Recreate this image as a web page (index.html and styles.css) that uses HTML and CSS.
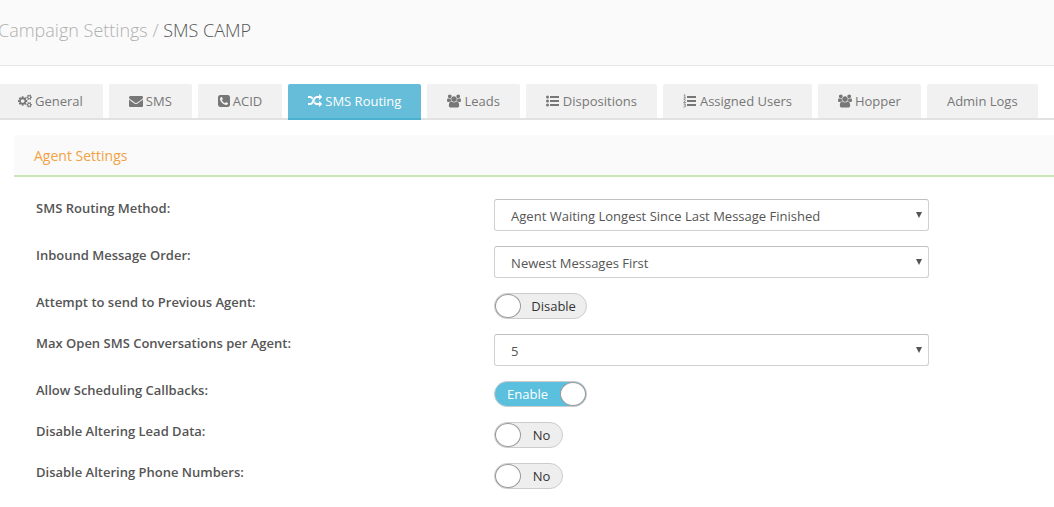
FILE: index.html
```html
<!DOCTYPE html>
<html lang="en">
<head>
<meta charset="utf-8">
<meta name="viewport" content="width=device-width, initial-scale=1">
<title>Campaign Settings / SMS CAMP</title>
<link rel="stylesheet" href="styles.css">
</head>
<body>
<svg class="sprite" aria-hidden="true">
  <symbol id="i-users" viewBox="0 0 1920 1792"><path d="M593 896q-162 5-265 128h-134q-82 0-138-40.500t-56-118.500q0-353 124-353 6 0 43.500 21t97.500 42.500 119 21.500q67 0 133-23-5 37-5 66 0 139 81 256zm1071 637q0 120-73 189.500t-194 69.500h-874q-121 0-194-69.500t-73-189.500q0-53 3.500-103.500t14-109 26.500-108.500 43-97.500 62-81 85.500-53.500 111.500-20q10 0 43 21.500t73 48 107 48 135 21.500 135-21.500 107-48 73-48 43-21.500q61 0 111.500 20t85.500 53.500 62 81 43 97.500 26.500 108.500 14 109 3.500 103.500zm-1024-1277q0 106-75 181t-181 75-181-75-75-181 75-181 181-75 181 75 75 181zm704 384q0 159-112.500 271.500t-271.500 112.500-271.500-112.500-112.500-271.500 112.500-271.500 271.500-112.500 271.500 112.500 112.500 271.500zm576 225q0 78-56 118.500t-138 40.500h-134q-103-123-265-128 81-117 81-256 0-29-5-66 66 23 133 23 59 0 119-21.500t97.500-42.500 43.500-21q124 0 124 353zm-128-609q0 106-75 181t-181 75-181-75-75-181 75-181 181-75 181 75 75 181z"/></symbol>
</svg>

<header class="page-head">
  <h1 class="page-title"><span class="page-section">Campaign Settings /</span> SMS CAMP</h1>
</header>

<nav class="tabs" aria-label="Campaign sections">
  <a class="tab" href="#general"><svg class="icon" viewBox="0 0 1920 1792" aria-hidden="true"><path d="M896 896q0-106-75-181t-181-75-181 75-75 181 75 181 181 75 181-75 75-181zm768 512q0-52-38-90t-90-38-90 38-38 90q0 53 37.500 90.500t90.500 37.500 90.500-37.500 37.500-90.500zm0-1024q0-52-38-90t-90-38-90 38-38 90q0 53 37.500 90.500t90.500 37.500 90.500-37.500 37.500-90.500zm-384 421v185q0 10-7 19.500t-16 10.500l-155 24q-11 35-32 76 34 48 90 115 7 11 7 20 0 12-7 19-23 30-82.500 89.500t-78.500 59.500q-11 0-21-7l-115-90q-37 19-77 31-11 108-23 155-7 24-30 24h-186q-11 0-20-7.500t-10-17.500l-23-153q-34-10-75-31l-118 89q-7 7-20 7-11 0-21-8-144-133-144-160 0-9 7-19 10-14 41-53t47-61q-23-44-35-82l-152-24q-10-1-17-9.500t-7-19.500v-185q0-10 7-19.500t16-10.500l155-24q11-35 32-76-34-48-90-115-7-11-7-20 0-12 7-20 22-30 82-89t79-59q11 0 21 7l115 90q34-18 77-32 11-108 23-154 7-24 30-24h186q11 0 20 7.500t10 17.500l23 153q34 10 75 31l118-89q8-7 20-7 11 0 21 8 144 133 144 160 0 8-7 19-12 16-42 54t-45 60q23 48 34 82l152 23q10 2 17 10.500t7 19.500zm640 533v140q0 16-149 31-12 27-30 52 51 113 51 138 0 4-4 7-122 71-124 71-8 0-46-47t-52-68q-20 2-30 2t-30-2q-14 21-52 68t-46 47q-2 0-124-71-4-3-4-7 0-25 51-138-18-25-30-52-149-15-149-31v-140q0-16 149-31 13-29 30-52-51-113-51-138 0-4 4-7 4-2 35-20t59-34 30-16q8 0 46 46.500t52 67.500q20-2 30-2t30 2q51-71 92-112l6-2q4 0 124 70 4 3 4 7 0 25-51 138 17 23 30 52 149 15 149 31zm0-1024v140q0 16-149 31-12 27-30 52 51 113 51 138 0 4-4 7-122 71-124 71-8 0-46-47t-52-68q-20 2-30 2t-30-2q-14 21-52 68t-46 47q-2 0-124-71-4-3-4-7 0-25 51-138-18-25-30-52-149-15-149-31v-140q0-16 149-31 13-29 30-52-51-113-51-138 0-4 4-7 4-2 35-20t59-34 30-16q8 0 46 46.500t52 67.500q20-2 30-2t30 2q51-71 92-112l6-2q4 0 124 70 4 3 4 7 0 25-51 138 17 23 30 52 149 15 149 31z"/></svg>General</a>
  <a class="tab" href="#sms"><svg class="icon" viewBox="0 0 1792 1792" aria-hidden="true"><path d="M1792 710v794q0 66-47 113t-113 47h-1472q-66 0-113-47t-47-113v-794q44 49 101 87 362 246 497 345 57 42 92.500 65.500t94.500 48 110 24.500h2q51 0 110-24.500t94.500-48 92.500-65.500q170-123 498-345 57-39 100-87zm0-294q0 79-49 151t-122 123q-376 261-468 325-10 7-42.500 31t-54 38.500-52 32.500-57.500 27-50 9h-2q-23 0-50-9t-57.500-27-52-32.500-54-38.500-42.500-31q-91-64-262-182.500t-205-142.500q-62-42-117-115.500t-55-136.500q0-78 41.500-130t118.500-52h1472q65 0 112.500 47t47.500 113z"/></svg>SMS</a>
  <a class="tab" href="#acid"><svg class="icon icon-narrow" viewBox="128 0 1536 1792" aria-hidden="true"><path d="M1408 1193q0-11-2-16t-18-16.500-40.500-25-47.500-26.500-45.500-25-28.500-15q-5-3-19-13t-25-15-21-5q-15 0-36.500 20.500t-39.500 45-38.500 45-33.500 20.500q-7 0-16.500-3.500t-15.500-6.500-17-9.500-14-8.500q-99-55-170-126.500t-127-170.500q-2-3-8.500-14t-9.500-17-6.500-15.500-3.500-16.500q0-13 20.500-33.500t45-38.500 45-39.500 20.500-36.500q0-10-5-21t-15-25-13-19q-3-6-15-28.500t-25-45.500-26.500-47.500-25-40.500-16.500-18-16-2q-48 0-101 22-46 21-80 94.500t-34 130.500q0 16 2.500 34t5 30.500 9 33 10 29.500 12.500 33 11 30q60 164 216.500 320.500t320.500 216.500q6 2 30 11t33 12.500 29.500 10 33 9 30.500 5 34 2.500q57 0 130.500-34t94.500-80q22-53 22-101zm256-777v960q0 119-84.500 203.500t-203.500 84.500h-960q-119 0-203.500-84.500t-84.500-203.500v-960q0-119 84.500-203.500t203.500-84.500h960q119 0 203.500 84.500t84.500 203.500z"/></svg>ACID</a>
  <a class="tab tab-active" href="#sms-routing" aria-current="page"><svg class="icon" viewBox="0 0 1792 1792" aria-hidden="true"><path d="M666 481q-60 92-137 273-22-45-37-72.500t-40.500-63.500-51-56.500-63-35-81.500-14.500h-224q-14 0-23-9t-9-23v-192q0-14 9-23t23-9h224q250 0 410 225zm1126 799q0 14-9 23l-320 320q-9 9-23 9-13 0-22.500-9.500t-9.500-22.500v-192q-32 0-85 .5t-81 1-73-1-71-5-64-10.500-63-18.500-58-28.500-59-40-55-53.500-56-69.500q59-93 136-273 22 45 37 72.500t40.500 63.500 51 56.500 63 35 81.500 14.500h256v-192q0-14 9-23t23-9q12 0 24 10l319 319q9 9 9 23zm0-896q0 14-9 23l-320 320q-9 9-23 9-13 0-22.500-9.500t-9.500-22.500v-192h-256q-48 0-87 15t-69 45-51 61.500-45 77.500q-32 62-78 171-29 66-49.500 111t-54 105-64 100-74 83-90 68.500-106.500 42-128 16.500h-224q-14 0-23-9t-9-23v-192q0-14 9-23t23-9h224q48 0 87-15t69-45 51-61.500 45-77.500q32-62 78-171 29-66 49.500-111t54-105 64-100 74-83 90-68.500 106.500-42 128-16.500h256v-192q0-14 9-23t23-9q12 0 24 10l319 319q9 9 9 23z"/></svg>SMS Routing</a>
  <a class="tab" href="#leads"><svg class="icon" aria-hidden="true"><use href="#i-users"/></svg>Leads</a>
  <a class="tab" href="#dispositions"><svg class="icon" viewBox="0 0 14 14" aria-hidden="true"><circle cx="1.500" cy="3" r="1.500"/><circle cx="1.500" cy="7" r="1.500"/><circle cx="1.500" cy="11" r="1.500"/><path d="M4 2h9v2H4zM4 6h9v2H4zM4 10h9v2H4z"/></svg>Dispositions</a>
  <a class="tab" href="#assigned-users"><svg class="icon" viewBox="0 0 14 14" aria-hidden="true"><path d="M4 2h9v2H4zM4 6h9v2H4zM4 10h9v2H4z"/><path class="icon-line" d="M.8 1.300 1.800.7V4M.6 4h2.300M.6 5.800q1.700-1 1.700.3Q2.200 7 .7 8.500h2.200M.6 10h2l-1 1.300q1.200 0 1.200 1T.5 13"/></svg>Assigned Users</a>
  <a class="tab" href="#hopper"><svg class="icon" aria-hidden="true"><use href="#i-users"/></svg>Hopper</a>
  <a class="tab" href="#admin-logs">Admin Logs</a>
</nav>

<main class="panel">
  <h2 class="panel-title">Agent Settings</h2>
  <form class="settings">
    <div class="row">
      <label class="row-label" for="routing">SMS Routing Method:</label>
      <div class="select-box">
        <select class="select" id="routing"><option>Agent Waiting Longest Since Last Message Finished</option></select>
        <svg class="arrow" viewBox="0 0 6 6" aria-hidden="true"><path d="M0 0h6L3 6z"/></svg>
      </div>
    </div>
    <div class="row">
      <label class="row-label" for="order">Inbound Message Order:</label>
      <div class="select-box">
        <select class="select" id="order"><option>Newest Messages First</option></select>
        <svg class="arrow" viewBox="0 0 6 6" aria-hidden="true"><path d="M0 0h6L3 6z"/></svg>
      </div>
    </div>
    <div class="row">
      <label class="row-label" for="previous">Attempt to send to Previous Agent:</label>
      <label class="toggle toggle-wide"><input class="toggle-input" type="checkbox" id="previous"><span class="knob"></span><span class="toggle-text">Disable</span></label>
    </div>
    <div class="row">
      <label class="row-label" for="max-open">Max Open SMS Conversations per Agent:</label>
      <div class="select-box">
        <select class="select" id="max-open"><option>5</option></select>
        <svg class="arrow" viewBox="0 0 6 6" aria-hidden="true"><path d="M0 0h6L3 6z"/></svg>
      </div>
    </div>
    <div class="row">
      <label class="row-label" for="callbacks">Allow Scheduling Callbacks:</label>
      <label class="toggle toggle-wide toggle-on"><input class="toggle-input" type="checkbox" id="callbacks" checked><span class="knob"></span><span class="toggle-text">Enable</span></label>
    </div>
    <div class="row">
      <label class="row-label" for="lead-data">Disable Altering Lead Data:</label>
      <label class="toggle"><input class="toggle-input" type="checkbox" id="lead-data"><span class="knob"></span><span class="toggle-text">No</span></label>
    </div>
    <div class="row">
      <label class="row-label" for="phones">Disable Altering Phone Numbers:</label>
      <label class="toggle"><input class="toggle-input" type="checkbox" id="phones"><span class="knob"></span><span class="toggle-text">No</span></label>
    </div>
  </form>
</main>
</body>
</html>
```
FILE: styles.css
```css
* {
  box-sizing: border-box;
}

body {
  margin: 0;
  background: #fff;
  color: #555;
  font: 13px/18px "Open Sans", sans-serif;
  overflow-x: hidden;
}

.sprite {
  display: none;
}

.page-head {
  padding: 18px 0 22px;
  background: #fafafa;
  border-bottom: 1px solid #e7e7e7;
}

.page-title {
  margin: 0 0 0 -2px;
  color: #555;
  font-size: 18px;
  font-weight: 300;
  line-height: 25px;
}

.page-section {
  color: #b0b0b0;
}

.tabs {
  display: flex;
  gap: 6px;
  margin-top: 18px;
  padding-right: 16px;
  margin-left: -2px;
  border-bottom: 2px solid #e2e2e2;
}

.tab {
  display: flex;
  align-items: center;
  gap: 3px;
  padding: 8px 20px;
  border-radius: 2px 2px 0 0;
  background: #f1f1f1;
  color: #777;
  text-decoration: none;
  white-space: nowrap;
}

.tab-active {
  margin-bottom: -2px;
  border-bottom: 2px solid #4cb1cf;
  background: #65bdd9;
  color: #fff;
}

.icon {
  flex: none;
  width: 14px;
  height: 14px;
  fill: currentColor;
}

.icon-narrow {
  width: 12px;
}

.icon-line {
  fill: none;
  stroke: currentColor;
  stroke-width: 0.8;
}

.panel {
  margin: 15px 0 0 14px;
}

.panel-title {
  margin: 0;
  padding: 11px 20px 9px;
  border-bottom: 2px solid #cbe5b8;
  background: #fafafa;
  color: #f2a143;
  font-size: 14px;
  font-weight: 400;
  line-height: 20px;
}

.settings {
  display: flex;
  flex-direction: column;
  gap: 15px;
  padding: 22px 0 18px 22px;
}

.row {
  display: grid;
  grid-template-columns: 45% minmax(0, 435px);
  align-items: start;
}

.row-label {
  font-weight: 600;
}

.select-box {
  position: relative;
}

.select {
  display: block;
  width: 100%;
  height: 32px;
  padding: 2px 28px 0 16px;
  border: 1px solid #d0d0d0;
  border-top-color: #c0c0c0;
  border-radius: 3px;
  appearance: none;
  background: #fff;
  color: #555;
  font: inherit;
}

.arrow {
  position: absolute;
  top: 13px;
  right: 7px;
  width: 6px;
  height: 6px;
  fill: #555;
  pointer-events: none;
}

.toggle {
  position: relative;
  display: flex;
  align-items: center;
  justify-self: start;
  min-width: 69px;
  height: 26px;
  border: 1px solid #ccc;
  border-radius: 13px;
  background: #eee;
  color: #333;
}

.toggle-wide {
  min-width: 93px;
}

.toggle-on {
  flex-direction: row-reverse;
  background: #5bc0de;
  color: #fff;
}

.toggle-input {
  position: absolute;
  inset: 0;
  width: 100%;
  height: 100%;
  margin: 0;
  opacity: 0;
}

.knob {
  flex: none;
  width: 26px;
  height: 24px;
  border: 1px solid #999;
  border-radius: 50%;
  background: #fff;
}

.toggle-text {
  flex: 1;
  padding: 0 10px;
  text-align: center;
}
```
